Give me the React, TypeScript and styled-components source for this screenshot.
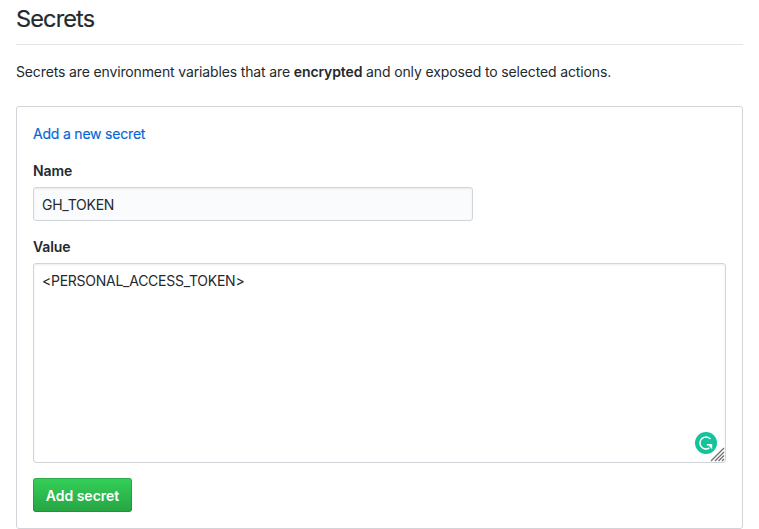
import React from "react";
import styled, { createGlobalStyle } from "styled-components";

const GlobalStyle = createGlobalStyle`
  * { box-sizing: border-box; }
  body {
    margin: 0;
    background: #fff;
    color: #24292e;
    font: 400 14px/21px Inter, "Liberation Sans", sans-serif;
  }
`;

const Page = styled.main`
  width: 759px;
  height: 529px;
  padding: 1px 16px 0;
  overflow: hidden;
`;

const Heading = styled.h2`
  margin: 0;
  height: 44px;
  border-bottom: 1px solid #e1e4e8;
  font-size: 23.5px;
  line-height: 36px;
  font-weight: 400;
  letter-spacing: -0.85px;
  -webkit-text-stroke: 0.2px currentColor;
`;

const Intro = styled.p`
  margin: 16px 0 24px;
  white-space: nowrap;
  letter-spacing: -0.135px;
`;

const Strong = styled.strong`
  font-weight: 600;
  letter-spacing: -0.12px;
`;

const Card = styled.form`
  display: flex;
  flex-direction: column;
  align-items: flex-start;
  width: 727px;
  height: 423px;
  padding: 16px;
  border: 1px solid #d1d5da;
  border-radius: 3px;
`;

const CardLink = styled.a`
  color: #0366d6;
  letter-spacing: -0.2px;
  text-decoration: none;
  -webkit-text-stroke: 0.15px currentColor;
`;

const Label = styled.label<{ $gap: number }>`
  margin: ${(p) => p.$gap}px 0 6px;
  font-weight: 600;
  letter-spacing: -0.08px;
`;

const NameInput = styled.input`
  display: block;
  width: 440px;
  height: 34px;
  padding: 6px 8px;
  border: 1px solid #d1d5da;
  border-radius: 3px;
  outline: none;
  background: #fafbfc;
  box-shadow: inset 0 1px 2px rgba(27, 31, 35, 0.075);
  color: #24292e;
  font: inherit;
  letter-spacing: -0.25px;
`;

const ValueField = styled.div`
  position: relative;
  width: 693px;
  height: 200px;
`;

const ValueInput = styled.textarea`
  display: block;
  width: 100%;
  height: 100%;
  padding: 6px 8px;
  border: 1px solid #d1d5da;
  border-radius: 3px;
  outline: none;
  resize: none;
  background: #fff;
  box-shadow: inset 0 1px 2px rgba(27, 31, 35, 0.075);
  color: #24292e;
  font: inherit;
  letter-spacing: -0.26px;
`;

const Badge = styled.svg`
  position: absolute;
  right: 9px;
  bottom: 9px;
`;

const Grip = styled.svg`
  position: absolute;
  right: 1px;
  bottom: 1px;
`;

const SubmitButton = styled.button`
  width: 99px;
  height: 34px;
  margin-top: 15px;
  padding: 1px 0 0;
  border: 1px solid rgba(27, 31, 35, 0.2);
  border-radius: 3px;
  background: linear-gradient(-180deg, #34d058, #28a745 90%) -1px -1px / 110% 110%;
  color: #fff;
  font: inherit;
  font-weight: 600;
  white-space: nowrap;
`;

export default function App() {
  return (
    <>
      <GlobalStyle />
      <Page>
        <Heading>Secrets</Heading>
        <Intro>
          Secrets are environment variables that are <Strong>encrypted</Strong> and only
          exposed to selected actions.
        </Intro>
        <Card onSubmit={(e) => e.preventDefault()}>
          <CardLink href="#new">Add a new secret</CardLink>
          <Label $gap={16} htmlFor="name">Name</Label>
          <NameInput id="name" defaultValue="GH_TOKEN" spellCheck={false} />
          <Label $gap={15} htmlFor="value">Value</Label>
          <ValueField>
            <ValueInput id="value" defaultValue="<PERSONAL_ACCESS_TOKEN>" spellCheck={false} />
            <Badge width="22" height="22" viewBox="0 0 22 22" aria-hidden="true">
              <circle cx="11" cy="11" r="11" fill="#15c39a" />
              <path
                d="M15.4 6.9A6 6 0 1 0 14.4 15.9"
                fill="none"
                stroke="#fff"
                strokeWidth="1.5"
              />
              <path d="M11.8 12H17.2V17.2L15.4 15.4L13.9 13.4H11.8Z" fill="#fff" />
            </Badge>
            <Grip width="15" height="15" viewBox="0 0 15 15" aria-hidden="true">
              <path
                d="M1 14L14 1M5 14l9-9M8.5 14l5.5-5.5M12 14l2-2"
                stroke="#707070"
                strokeWidth="1.3"
                fill="none"
              />
            </Grip>
          </ValueField>
          <SubmitButton type="submit">Add secret</SubmitButton>
        </Card>
      </Page>
    </>
  );
}
